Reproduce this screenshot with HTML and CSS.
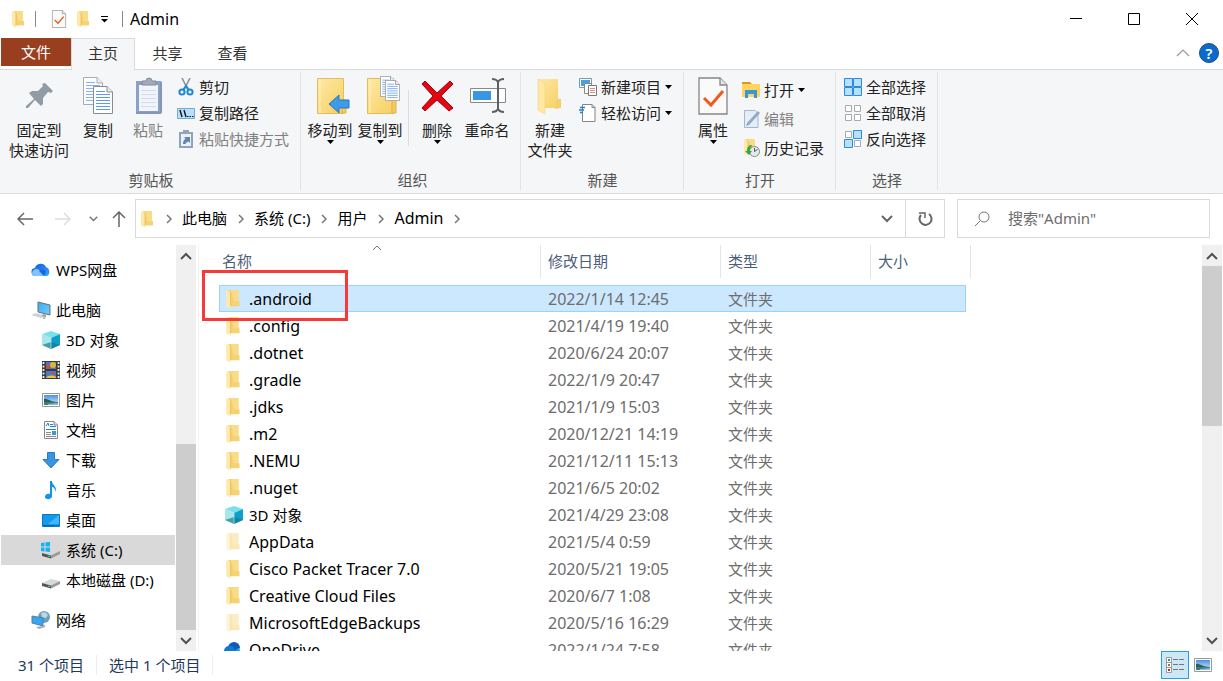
FILE: index.html
```html
<!DOCTYPE html>
<html lang="zh-CN">
  <head>
    <meta charset="UTF-8">
    <meta name="viewport" content="width=device-width, initial-scale=1.0">
    <title>Admin</title>
    <link rel="stylesheet" href="styles.css">
  </head>
  <body>
    <!-- shared icons -->
    <svg class="sprite" aria-hidden="true">
      <defs>
        <linearGradient id="gold" x1="0" y1="0" x2="1" y2="1">
          <stop offset="0" stop-color="#ffe9a6"/><stop offset="1" stop-color="#f6cf62"/>
        </linearGradient>
        <linearGradient id="cloud" x1="0" y1="0" x2="1" y2="1">
          <stop offset="0" stop-color="#1456d8"/><stop offset="1" stop-color="#35a5ff"/>
        </linearGradient>
        <linearGradient id="sky" x1="0" y1="0" x2="0" y2="1">
          <stop offset="0" stop-color="#4c8fe8"/><stop offset="1" stop-color="#d8effa"/>
        </linearGradient>
        <linearGradient id="screen" x1="0" y1="0" x2="1" y2="1">
          <stop offset="0" stop-color="#33aef5"/><stop offset="1" stop-color="#7cc9f5"/>
        </linearGradient>
      </defs>
      <symbol id="folder" viewBox="0 0 18 18">
        <path d="M4 1h9v10h1v4.500H4z" fill="#f5d374"/>
        <path d="M6 1h7v10h-4z" fill="#f9dc88"/>
        <path d="M2 1l4 2v14.500l-4-2z" fill="#ffe9a8"/>
        <path d="M6 3v12.500" stroke="#e2b84c" stroke-width=".7"/>
      </symbol>
      <symbol id="cube" viewBox="0 0 20 20">
        <path d="M10 1l9 3-9 4-9-4z" fill="#7be0ea"/>
        <path d="M1 4l9 4v11l-9-4z" fill="#a6e6ec"/>
        <path d="M19 4l-9 4v11l9-4z" fill="#0c9fc8"/>
        <path d="M10 19l-9-4 9-3 9 3z" fill="#12798f" opacity=".65"/>
        <path d="M10 8v11" stroke="#cdf5f8" stroke-width=".6"/>
      </symbol>
      <symbol id="photo" viewBox="0 0 18 14">
        <path d="M.5.5h17v13H.5z" fill="#fff" stroke="#989898"/>
        <path d="M2 2h14v10H2z" fill="url(#sky)"/>
        <path d="M2 7c3-1 5 1 14 2v3H2z" fill="#3d7d82"/>
        <path d="M2 6c3-1 6 2 9 3H2z" fill="#2f6047"/>
        <path d="M6 11l10-1v2H6z" fill="#8bbccc"/>
      </symbol>
      <symbol id="check-doc" viewBox="0 0 30 38">
        <path d="M1 1h21l7 7v29H1z" fill="#fafafa" stroke="#868686" stroke-width="1.3"/>
        <path d="M22 1v7h7" fill="#e2e6ea" stroke="#868686" stroke-width="1.3"/>
        <path d="M6 21l7 7 12-14" fill="none" stroke="#f05a1c" stroke-width="3"/>
      </symbol>
      <symbol id="text-doc" viewBox="0 0 20 28">
        <path d="M.5.5H14l5.500 5.500v21.500H.5z" fill="#fff" stroke="#848d96"/>
        <path d="M14 .5V6h5.500" fill="#e9edf1" stroke="#848d96"/>
        <path d="M3 5.500h9M3 8.500h14M3 11.500h14M3 14.500h14M3 17.500h14M3 20.500h14M3 23.500h14" stroke="#5b98ee"/>
      </symbol>
      <symbol id="caret" viewBox="0 0 7 4"><path d="M0 0h7L3.500 4z"/></symbol>
      <symbol id="chev-right" viewBox="0 0 8 10"><path d="M2 1l4 4-4 4" fill="none" stroke="#777" stroke-width="1.500"/></symbol>
      <symbol id="chev-down" viewBox="0 0 12 8"><path d="M1 1l5 5 5-5" fill="none" stroke="currentColor" stroke-width="2"/></symbol>
      <symbol id="chev-up" viewBox="0 0 12 8"><path d="M1 7l5-5 5 5" fill="none" stroke="currentColor" stroke-width="2"/></symbol>
      <symbol id="disk" viewBox="0 0 20 20">
        <path d="M1 13l9-4 9 2-8 5z" fill="#d8d8d8"/>
        <path d="M1 13l9 2.500v3L1 16z" fill="#555"/>
        <path d="M10 15.500l9-4.500v3l-9 4.500z" fill="#999"/>
        <path d="M7 16l2 .6" stroke="#4fd060" stroke-width="1.200"/>
      </symbol>
    </svg>

    <div class="window">
      <header class="titlebar">
        <svg class="i18"><use href="#folder"/></svg>
        <span class="bar"></span>
        <button class="plain" aria-label="属性"><svg class="title-doc"><use href="#check-doc"/></svg></button>
        <button class="plain" aria-label="新建文件夹"><svg class="i18"><use href="#folder"/></svg></button>
        <button class="plain more" aria-label="自定义快速访问工具栏"><svg width="7" height="7" viewBox="0 0 7 7"><path d="M0 .5h7" stroke="#000"/><path d="M0 3h7L3.500 6.500z"/></svg></button>
        <span class="bar title-bar"></span>
        <h1>Admin</h1>
        <div class="window-buttons">
          <button aria-label="最小化"><svg width="12" height="12"><path d="M0 5.500h12" stroke="#000"/></svg></button>
          <button aria-label="最大化"><svg width="12" height="12"><path d="M.5.5h11v11H.5z" fill="none" stroke="#000"/></svg></button>
          <button aria-label="关闭"><svg width="12" height="12"><path d="M0 0l12 12M12 0L0 12" stroke="#000"/></svg></button>
        </div>
      </header>

      <nav class="tabs">
        <button class="file-tab">文件</button>
        <button class="tab active">主页</button>
        <button class="tab">共享</button>
        <button class="tab">查看</button>
        <div class="tabs-right">
          <button class="plain" aria-label="折叠功能区"><svg width="14" height="8"><path d="M1 7l6-6 6 6" fill="none" stroke="#999" stroke-width="1.200"/></svg></button>
          <button class="help" aria-label="帮助">?</button>
        </div>
      </nav>

      <section class="ribbon">
        <div class="group">
          <div class="group-body">
            <button class="big pin">
              <svg viewBox="0 0 40 40"><path d="M26 8l8 8-2 2-3-1-5 6 0 6-2 2-6-6-7 8-2 0 0-2 8-7-5-6 3-2 6 0 5-5-1-2z" fill="#919ba3"/></svg>
              <span>固定到<br>快速访问</span>
            </button>
            <button class="big">
              <svg viewBox="0 0 40 40"><use href="#text-doc" x="5" y="2" width="20" height="28" opacity=".7"/><use href="#text-doc" x="15" y="11" width="20" height="28"/></svg>
              <span>复制</span>
            </button>
            <button class="big" disabled>
              <svg viewBox="0 0 40 40">
                <path d="M8 6h24a2 2 0 012 2v29a2 2 0 01-2 2H8z" fill="#8497bb"/>
                <path d="M8 6h24v31H8z" fill="#8ba0c6"/>
                <path d="M11 10h19v26H11z" fill="#f1f5fa"/>
                <path d="M13 15.500h15M13 19.500h15M13 23.500h15M13 27.500h15M13 31.500h15" stroke="#d3dcea"/>
                <path d="M14 6h4a3 3 0 016 0h4v4H14z" fill="#a3abb8" stroke="#7e8aa0"/>
              </svg>
              <span>粘贴</span>
            </button>
            <div class="small-list">
              <button class="small"><svg class="i18" viewBox="0 0 18 18"><path d="M5 0l6 12M13 0L7 12" stroke="#8a9299" stroke-width="1.600"/><circle cx="5" cy="14" r="2.600" fill="none" stroke="#1e8bd0" stroke-width="2"/><circle cx="13" cy="14" r="2.600" fill="none" stroke="#1e8bd0" stroke-width="2"/><path d="M6 12l3-4 3 4" stroke="#1e8bd0" stroke-width="2" fill="none"/></svg>剪切</button>
              <button class="small"><svg class="i18" viewBox="0 0 18 18"><path d="M.5 4.500h17v10H.5z" fill="#b6e0fb" stroke="#74abd0"/><path d="M3 6l2 7M7 6l2 7" stroke="#111" stroke-width="1.400"/><path d="M10 12.500h1.500M12.500 12.500H14M15 12.500h1.500" stroke="#111"/></svg>复制路径</button>
              <button class="small" disabled><svg class="i18" viewBox="0 0 18 18"><path d="M2 2h14v16H2z" fill="#8fa2c4"/><path d="M4 4h10v12H4z" fill="#edf2f8"/><path d="M6 0h6v4H6z" fill="#94a1b8"/><path d="M6 14c0-3 1-4 2.500-5.500L7 7h6v6l-1.500-1.500C10 12 9 12.500 8.500 14z" fill="#6484b8"/></svg>粘贴快捷方式</button>
            </div>
          </div>
          <div class="group-label">剪贴板</div>
        </div>

        <div class="group organize">
          <div class="group-body">
            <button class="big">
              <svg viewBox="0 0 40 40"><path d="M7.500 3.500h26v35h-26z" fill="url(#gold)" stroke="#e3bd58"/><path d="M10 4v34" stroke="#fff2c4"/><path d="M32 25h4v13h-4z" fill="#f4cc5e" stroke="#dfb347"/><path d="M19 29l10-9v5h10v8H29v5z" fill="#3e9be8" stroke="#2779bd"/></svg>
              <span>移动到</span><svg class="caret"><use href="#caret"/></svg>
            </button>
            <button class="big">
              <svg viewBox="0 0 40 40"><path d="M7.500 3.500h26v35h-26z" fill="url(#gold)" stroke="#e3bd58"/><path d="M10 4v34" stroke="#fff2c4"/><path d="M32 25h4v13h-4z" fill="#f4cc5e" stroke="#dfb347"/><use href="#text-doc" x="20" y="1" width="15" height="21"/><use href="#text-doc" x="25" y="5" width="15" height="21"/></svg>
              <span>复制到</span><svg class="caret"><use href="#caret"/></svg>
            </button>
            <span class="divider"></span>
            <button class="big">
              <svg viewBox="0 0 40 40"><path d="M5 9l3-3 12 12L33 6l3 3-12 12 12 12-4 3-12-11L8 36l-3-3 11-12z" fill="#e30613" stroke="#a8000c"/></svg>
              <span>删除</span><svg class="caret"><use href="#caret"/></svg>
            </button>
            <button class="big">
              <svg viewBox="0 0 40 40"><path d="M3.500 13.500h35v14h-35z" fill="#fff" stroke="#888"/><path d="M6 16h18v9H6z" fill="#3797e5"/><path d="M31 7v27M25 4c4 0 5 1 6 3 1-2 2-3 6-3M25 37c4 0 5-1 6-3 1 2 2 3 6 3" fill="none" stroke="#606060" stroke-width="2"/></svg>
              <span>重命名</span>
            </button>
          </div>
          <div class="group-label">组织</div>
        </div>

        <div class="group">
          <div class="group-body">
            <button class="big">
              <svg viewBox="0 0 40 40"><path d="M8 4h20v21h2v8H8z" fill="url(#gold)"/><path d="M8 4l7 4v31l-7-4z" fill="#ffe8a3" stroke="#efcc72" stroke-width=".5"/><path d="M27 24h4v9l-6 1z" fill="#f3d06e"/></svg>
              <span>新建<br>文件夹</span>
            </button>
            <div class="small-list">
              <button class="small"><svg class="i18" viewBox="0 0 18 18"><path d="M.5.5h12v9H.5z" fill="#fff" stroke="#6e9ebf"/><path d="M2 2h9v6H2z" fill="#4aa0df"/><path d="M5.500 5.500h7v10h-7z" fill="#fff" stroke="#888"/><path d="M9.500 7.500h8v10h-8z" fill="#fff" stroke="#777"/><path d="M11 10.500h5M11 12.500h5M11 14.500h5" stroke="#e38a86"/></svg>新建项目<svg class="caret"><use href="#caret"/></svg></button>
              <button class="small"><svg class="i18" viewBox="0 0 18 18"><path d="M3.500.5H13l3 3v14H3.500z" fill="#fff" stroke="#858585"/><path d="M13 .5v3h3" fill="none" stroke="#858585"/><path d="M1 3.500h5M0 6h5M1 8.500h3" stroke="#2281cb" stroke-width="1.300"/></svg>轻松访问<svg class="caret"><use href="#caret"/></svg></button>
            </div>
          </div>
          <div class="group-label">新建</div>
        </div>

        <div class="group">
          <div class="group-body">
            <button class="big">
              <svg viewBox="0 0 40 40"><use href="#check-doc" x="5" y="2" width="30" height="38"/></svg>
              <span>属性</span><svg class="caret"><use href="#caret"/></svg>
            </button>
            <div class="small-list loose">
              <button class="small"><svg class="i18" viewBox="0 0 18 18"><path d="M0 1h8l2 2H0z" fill="#d99c19"/><path d="M0 3h18v13H0z" fill="#ffd35e"/><path d="M3 17v-8h12v8h-3v-4H6v4z" fill="#3797dc"/></svg>打开<svg class="caret"><use href="#caret"/></svg></button>
              <button class="small" disabled><svg class="i18" viewBox="0 0 18 18"><path d="M2.500.5H13l3 3v14H2.500z" fill="#e5edf6" stroke="#a5b5cc"/><path d="M5 13L16 1l2 2L7 15l-3 1z" fill="#93a8c6"/></svg>编辑</button>
              <button class="small"><svg class="i18" viewBox="0 0 18 18"><use href="#folder" x="0" y="-1" width="18" height="18"/><circle cx="12.500" cy="12.500" r="5" fill="#e6eaec" stroke="#7f8c91"/><path d="M12.500 9v3.500l3-2" fill="none" stroke="#555"/><path d="M10 6c-4 0-5 3-5 6H3l4 4 3-4H8c0-2 0-4 2-5z" fill="#36a642"/></svg>历史记录</button>
            </div>
          </div>
          <div class="group-label">打开</div>
        </div>

        <div class="group">
          <div class="group-body">
            <div class="small-list">
              <button class="small"><svg class="i18" viewBox="0 0 18 18"><path d="M.5.5h8v8h-8zM9.500.5h8v8h-8zM.5 9.500h8v8h-8zM9.500 9.500h8v8h-8z" fill="#b8dffb" stroke="#2b8bdc"/></svg>全部选择</button>
              <button class="small"><svg class="i18" viewBox="0 0 18 18"><path d="M1.500 1.500h6v6h-6zM10.500 1.500h6v6h-6zM1.500 10.500h6v6h-6zM10.500 10.500h6v6h-6z" fill="#fff" stroke="#aaa"/></svg>全部取消</button>
              <button class="small"><svg class="i18" viewBox="0 0 18 18"><path d="M1.500 1.500h6v6h-6zM10.500 10.500h6v6h-6z" fill="#fff" stroke="#aaa"/><path d="M9.500.5h8v8h-8zM.5 9.500h8v8h-8z" fill="#b8dffb" stroke="#2b8bdc"/></svg>反向选择</button>
            </div>
          </div>
          <div class="group-label">选择</div>
        </div>
      </section>

      <div class="address-row">
        <div class="history">
          <button class="plain" aria-label="后退"><svg width="16" height="14"><path d="M16 7H1M7 1L1 7l6 6" fill="none" stroke="#666" stroke-width="1.500"/></svg></button>
          <button class="plain" aria-label="前进" disabled><svg width="16" height="14"><path d="M0 7h15M9 1l6 6-6 6" fill="none" stroke="#ddd" stroke-width="1.500"/></svg></button>
          <button class="plain recent" aria-label="最近浏览的位置"><svg width="9" height="6" viewBox="0 0 12 8"><use href="#chev-down"/></svg></button>
          <button class="plain up" aria-label="上移"><svg width="14" height="16"><path d="M7 16V1M1 7l6-6 6 6" fill="none" stroke="#666" stroke-width="1.500"/></svg></button>
        </div>
        <div class="address">
          <svg class="i18"><use href="#folder"/></svg>
          <svg class="sep"><use href="#chev-right"/></svg>
          <a href="#">此电脑</a>
          <svg class="sep"><use href="#chev-right"/></svg>
          <a href="#">系统 (C:)</a>
          <svg class="sep"><use href="#chev-right"/></svg>
          <a href="#">用户</a>
          <svg class="sep"><use href="#chev-right"/></svg>
          <a href="#" class="latin">Admin</a>
          <svg class="sep"><use href="#chev-right"/></svg>
          <button class="plain drop" aria-label="以前的位置"><svg width="12" height="8"><use href="#chev-down"/></svg></button>
          <button class="plain refresh" aria-label="刷新"><svg width="16" height="16"><path d="M4 4a6 6 0 108-1" fill="none" stroke="#666" stroke-width="2"/><path d="M2 2h6v5" fill="none" stroke="#666" stroke-width="1.500"/></svg></button>
        </div>
        <label class="search">
          <svg width="16" height="16"><circle cx="10" cy="6" r="5" fill="none" stroke="#777"/><path d="M6.500 9.500L1 15" stroke="#777"/></svg>
          <input type="search" placeholder='搜索"Admin"' aria-label="搜索">
        </label>
      </div>

      <main class="content">
        <aside class="sidebar">
          <ul class="tree">
            <li class="root"><a href="#"><svg viewBox="0 0 20 20"><path d="M5 16a4 4 0 01-1-8 6 6 0 0111-1 5 5 0 011 9z" fill="url(#cloud)"/><path d="M1 13c1-5 7-5 9-1l3 4H5c-3 0-4-1-4-3z" fill="#7fc4ff"/><path d="M8 11c2-3 6-2 7 1l-2 4z" fill="#1d65e8"/></svg>WPS网盘</a></li>
            <li class="root"><a href="#"><svg viewBox="0 0 20 20"><path d="M7 2l12 3v10L7 12z" fill="url(#screen)" stroke="#61717c"/><path d="M0 15l5-2 10 3-5 2z" fill="#ccd2d6"/><path d="M12 14l3 1v2l-4-1z" fill="#929ea5"/><path d="M11 18l3-1 1 1-2 1z" fill="#aaa"/></svg>此电脑</a></li>
            <li><a href="#"><svg><use href="#cube"/></svg>3D 对象</a></li>
            <li><a href="#"><svg viewBox="0 0 20 20"><path d="M1 1h18v18H1z" fill="#3a3a3a"/><path d="M2.500 2v16M17.500 2v16" stroke="#eee" stroke-width="1.800" stroke-dasharray="2 1.500"/><path d="M5 2h10v7H5z" fill="#4b78ca"/><path d="M5 11h10v7H5z" fill="#4b78ca"/><circle cx="12" cy="5" r="3" fill="#e1b829"/><circle cx="7" cy="7" r="2" fill="#d9472d"/><path d="M10 12l4 0-2 3z" fill="#d9472d"/><path d="M5 18c2-3 7-3 10-1v1z" fill="#f0c52d"/></svg>视频</a></li>
            <li><a href="#"><svg viewBox="0 0 20 20"><use href="#photo" x="1" y="3" width="18" height="14"/></svg>图片</a></li>
            <li><a href="#"><svg viewBox="0 0 20 20"><path d="M3.500 1.500H13l3.500 3.500v13.500h-13z" fill="#fff" stroke="#838b91"/><path d="M13 1.500V5h3.500" fill="#ddd" stroke="#838b91"/><path d="M5 6l2-3 1 3M9 4.500h3M9 6.500h6M5 9.500h10" fill="none" stroke="#2486d0"/><path d="M5 12.500h5M5 14.500h5M5 16.500h10" stroke="#888"/><path d="M11 11h4v4h-4z" fill="#4298ce"/></svg>文档</a></li>
            <li><a href="#"><svg viewBox="0 0 20 20"><path d="M6.500 2.500h7v7h4.500L10 18 2 9.500h4.500z" fill="#3895e1" stroke="#2a7bc3"/></svg>下载</a></li>
            <li><a href="#"><svg viewBox="0 0 20 20"><path d="M9 1h2c0 4 5 5 4 11-1-4-3-5-4-5v9c0 4-7 4-7 1 0-3 3-4 5-3z" fill="#0d94ed"/></svg>音乐</a></li>
            <li><a href="#"><svg viewBox="0 0 20 20"><path d="M1.500 4.500h17v12h-17z" fill="#1498ec" stroke="#0878bd"/><path d="M18 5v9H7z" fill="#40b5ff"/><path d="M2 15.500h12M15 15.500h1M17 15.500h1" stroke="#07679e"/></svg>桌面</a></li>
            <li class="selected"><a href="#"><svg viewBox="0 0 20 20"><use href="#disk"/><path d="M0 3l3.500-.5v4H0zM4.500 2.300L9 2v4.500H4.500zM0 7.500h3.500v4L0 11zM4.500 7.500H9V12l-4.500-.5z" fill="#17b3ef"/></svg>系统 (C:)</a></li>
            <li><a href="#"><svg><use href="#disk"/></svg>本地磁盘 (D:)</a></li>
            <li class="root"><a href="#"><svg viewBox="0 0 20 20"><circle cx="13" cy="7" r="6" fill="#6a9fbe"/><path d="M10 3l4-1 3 3-2 3-4-1z" fill="#bdd7e4"/><path d="M1 6l11 2v8L1 13z" fill="#37a6ed" stroke="#5480a0"/><path d="M12 16l2-1v2l-6 2-3-2z" fill="#9dacb5"/></svg>网络</a></li>
          </ul>
          <div class="scrollbar side-scroll">
            <button aria-label="向上滚动"><svg width="12" height="8"><use href="#chev-up"/></svg></button>
            <div class="track"><span class="thumb"></span></div>
            <button aria-label="向下滚动"><svg width="12" height="8"><use href="#chev-down"/></svg></button>
          </div>
        </aside>

        <section class="files">
          <svg class="sort-mark" width="10" height="6"><path d="M1 5l4-4 4 4" fill="none" stroke="#777"/></svg>
          <table>
            <colgroup><col class="c-name"><col class="c-date"><col class="c-type"><col class="c-size"><col class="c-end"></colgroup>
            <thead>
              <tr><th>名称</th><th>修改日期</th><th>类型</th><th>大小</th><th></th></tr>
            </thead>
            <tbody>
              <tr class="selected"><td class="latin"><svg><use href="#folder"/></svg>.android</td><td class="latin">2022/1/14 12:45</td><td>文件夹</td><td></td></tr>
              <tr><td class="latin"><svg><use href="#folder"/></svg>.config</td><td class="latin">2021/4/19 19:40</td><td>文件夹</td><td></td></tr>
              <tr><td class="latin"><svg><use href="#folder"/></svg>.dotnet</td><td class="latin">2020/6/24 20:07</td><td>文件夹</td><td></td></tr>
              <tr><td class="latin"><svg><use href="#folder"/></svg>.gradle</td><td class="latin">2022/1/9 20:47</td><td>文件夹</td><td></td></tr>
              <tr><td class="latin"><svg><use href="#folder"/></svg>.jdks</td><td class="latin">2021/1/9 15:03</td><td>文件夹</td><td></td></tr>
              <tr><td class="latin"><svg><use href="#folder"/></svg>.m2</td><td class="latin">2020/12/21 14:19</td><td>文件夹</td><td></td></tr>
              <tr><td class="latin"><svg><use href="#folder"/></svg>.NEMU</td><td class="latin">2021/12/11 15:13</td><td>文件夹</td><td></td></tr>
              <tr><td class="latin"><svg><use href="#folder"/></svg>.nuget</td><td class="latin">2021/6/5 20:02</td><td>文件夹</td><td></td></tr>
              <tr><td><svg><use href="#cube"/></svg>3D 对象</td><td class="latin">2021/4/29 23:08</td><td>文件夹</td><td></td></tr>
              <tr class="hidden-item"><td class="latin"><svg><use href="#folder"/></svg>AppData</td><td class="latin">2021/5/4 0:59</td><td>文件夹</td><td></td></tr>
              <tr><td class="latin"><svg><use href="#folder"/></svg>Cisco Packet Tracer 7.0</td><td class="latin">2020/5/21 19:05</td><td>文件夹</td><td></td></tr>
              <tr><td class="latin"><svg><use href="#folder"/></svg>Creative Cloud Files</td><td class="latin">2020/6/7 1:08</td><td>文件夹</td><td></td></tr>
              <tr class="hidden-item"><td class="latin"><svg><use href="#folder"/></svg>MicrosoftEdgeBackups</td><td class="latin">2020/5/16 16:29</td><td>文件夹</td><td></td></tr>
              <tr><td class="latin"><svg viewBox="0 0 20 20"><path d="M4 8a6 6 0 0112 0l-6 6z" fill="#0a5cb8"/><path d="M5 16a5 5 0 010-10c4-1 6 3 8 10z" fill="#0f79d4"/><path d="M6 16l8-8a5 5 0 011 8z" fill="#249fe8"/></svg>OneDrive</td><td class="latin">2022/1/24 7:58</td><td>文件夹</td><td></td></tr>
            </tbody>
          </table>
          <div class="highlight"></div>
        </section>
        <div class="scrollbar file-scroll">
          <button aria-label="向上滚动"><svg width="12" height="8"><use href="#chev-up"/></svg></button>
          <div class="track"><span class="thumb"></span></div>
          <button aria-label="向下滚动"><svg width="12" height="8"><use href="#chev-down"/></svg></button>
        </div>
      </main>

      <footer class="status">
        <span>31 个项目</span>
        <span>选中 1 个项目</span>
        <div class="views">
          <button class="active" aria-label="详细信息"><svg width="20" height="18"><path d="M1.500 1.500h5v5h-5zM1.500 6.500h5v5h-5zM1.500 11.500h5v5h-5z" fill="#fff" stroke="#999"/><path d="M3 3h2v2H3z" fill="#3a7fae"/><path d="M3 8h2v2H3z" fill="#b06a3a"/><path d="M3 13h2v2H3z" fill="#c22"/><path d="M8 3.500h5M14 3.500h5M8 8.500h5M14 8.500h5M8 13.500h5M14 13.500h5" stroke="#777"/></svg></button>
          <button aria-label="大图标"><svg width="18" height="14"><use href="#photo"/></svg></button>
        </div>
      </footer>
    </div>
  </body>
</html>
```

FILE: styles.css
```css
:root {
  --ribbon: #f5f6f7;
  --line: #dadbdc;
  --border: #d9d9d9;
  --muted: #6d6d6d;
  --head: #4c607a;
  --scroll: #f0f0f0;
  --thumb: #cdcdcd;
}

* {
  box-sizing: border-box;
}

body {
  margin: 0;
  font-family: "Noto Sans", "Noto Sans CJK SC", sans-serif;
  font-size: 15px;
  line-height: 20px;
  color: #000;
  background: #fff;
}

button {
  font: inherit;
  color: inherit;
  border: none;
  background: none;
  padding: 0;
}

a {
  color: inherit;
  text-decoration: none;
}

svg {
  display: block;
  flex: none;
}

.sprite {
  position: absolute;
  width: 0;
  height: 0;
}

.i18 {
  width: 18px;
  height: 18px;
}

.latin {
  font-size: 16px;
}

.window {
  display: flex;
  flex-direction: column;
  height: 100vh;
  overflow: hidden;
}

.plain {
  display: flex;
  align-items: center;
  justify-content: center;
}

/* title bar */
.titlebar {
  display: flex;
  align-items: center;
  height: 38px;
  padding-left: 10px;
}

.bar {
  width: 1px;
  height: 16px;
  margin: 0 15px 0 7px;
  background: #888;
}

.title-doc {
  width: 16px;
  height: 18px;
  margin-right: 8px;
}

.more {
  margin-left: 8px;
}

.title-bar {
  margin: 0 7px 0 14px;
}

h1 {
  margin: 0;
  font-size: 16px;
  font-weight: 400;
}

.window-buttons {
  display: flex;
  margin-left: auto;
  padding-right: 2px;
}

.window-buttons button {
  display: flex;
  align-items: center;
  justify-content: center;
  width: 58px;
  height: 38px;
}

/* tabs */
.tabs {
  display: flex;
  height: 32px;
  padding-left: 1px;
  border-bottom: 1px solid var(--line);
}

.file-tab {
  width: 70px;
  height: 28px;
  color: #fff;
  background: #9a3e20;
}

.tab {
  width: 64px;
  height: 32px;
  padding-bottom: 3px;
  border: 1px solid transparent;
  border-bottom: none;
  color: #333;
}

.tab + .tab {
  width: 65px;
}

.tab.active {
  background: var(--ribbon);
  border-color: var(--line);
}

.tabs-right {
  display: flex;
  align-items: center;
  gap: 9px;
  margin-left: auto;
  padding: 0 4px 2px 0;
}

.help {
  width: 20px;
  height: 20px;
  border: 1px solid #1c4d80;
  border-radius: 50%;
  background: #0a6bce;
  color: #fff;
  font-weight: 600;
  line-height: 18px;
}

/* ribbon */
.ribbon {
  display: flex;
  height: 124px;
  padding-left: 1px;
  background: var(--ribbon);
  border-bottom: 1px solid var(--line);
  color: #222;
}

.group {
  display: flex;
  flex-direction: column;
  margin: 2px 0 3px;
  padding: 0 11px 0 4px;
  border-right: 1px solid #e2e3e4;
}

.group.organize {
  padding-right: 8px;
}

.group-body {
  display: flex;
  flex: 1;
  align-items: flex-start;
  padding-top: 3px;
}

.group-label {
  margin-right: -8px;
  line-height: 20px;
  text-align: center;
  color: #555;
}

.big {
  display: flex;
  flex-direction: column;
  align-items: center;
  width: 50px;
  white-space: nowrap;
}

.big.pin {
  width: 68px;
}

.big > svg {
  width: 40px;
  height: 40px;
  margin-bottom: 5px;
}

.big > .caret,
.caret {
  width: 7px;
  height: 4px;
  margin: 0;
}

button:disabled {
  color: #808080;
}

.divider {
  width: 1px;
  height: 56px;
  margin: 15px 3px 0;
  background: #dcddde;
}

.small-list {
  padding-left: 4px;
}

.small {
  display: flex;
  align-items: center;
  height: 26px;
  gap: 4px;
  margin-top: -1px;
  margin-bottom: 1px;
  white-space: nowrap;
}

.loose .small {
  height: 29px;
  margin: 0;
}

/* address row */
.address-row {
  display: flex;
  padding: 5px 13px 7px 0;
}

.history {
  display: flex;
  align-items: center;
  width: 135px;
  padding-left: 17px;
  color: #777;
}

.history .plain + .plain {
  margin-left: 22px;
}

.history .plain + .recent {
  margin-left: 18px;
}

.history .plain + .up {
  margin-left: 14px;
}

.address {
  display: flex;
  flex: 1;
  align-items: center;
  height: 39px;
  padding-left: 3px;
  border: 1px solid var(--border);
}

.address a {
  padding-bottom: 2px;
}

.address .sep {
  width: 8px;
  height: 10px;
  margin: 0 9px 0 10px;
}

.address .i18 + .sep {
  margin-left: 8px;
}

.drop {
  width: 36px;
  margin-left: auto;
  color: #666;
}

.refresh {
  align-self: stretch;
  width: 39px;
  border-left: 1px solid var(--border);
}

.search {
  display: flex;
  align-items: center;
  gap: 18px;
  width: 253px;
  margin-left: 12px;
  padding-left: 16px;
  border: 1px solid var(--border);
}

.search input {
  flex: 1;
  min-width: 0;
  padding: 0 0 2px;
  border: none;
  outline: none;
  font: inherit;
  background: none;
}

.search input::placeholder {
  color: var(--muted);
}

/* main area */
.content {
  display: flex;
  flex: 1;
  min-height: 0;
}

.sidebar {
  display: flex;
  width: 199px;
  padding-right: 2px;
  border-right: 1px solid #f3f3f3;
}

.tree {
  flex: 1;
  margin: 0;
  padding: 10px 1px 0;
  list-style: none;
}

.tree a {
  display: flex;
  align-items: center;
  gap: 5px;
  height: 30px;
  padding-left: 40px;
  white-space: nowrap;
}

.tree svg {
  width: 20px;
  height: 20px;
}

.tree .root a {
  padding-left: 30px;
}

.tree li + .root {
  margin-top: 10px;
}

.tree .selected {
  background: #d9d9d9;
}

.scrollbar {
  display: flex;
  flex-direction: column;
  width: 20px;
  background: var(--scroll);
  color: #505050;
}

.scrollbar button {
  display: flex;
  align-items: center;
  justify-content: center;
  height: 21px;
}

.track {
  display: flex;
  flex: 1;
}

.thumb {
  flex: 1;
  background: var(--thumb);
}

.side-scroll .thumb {
  height: 51%;
  align-self: flex-end;
}

.file-scroll {
  margin-right: 1px;
}

.file-scroll .thumb {
  height: 44%;
}

/* file list */
.files {
  position: relative;
  flex: 1;
  padding-left: 20px;
  overflow: hidden;
}

table {
  table-layout: fixed;
  width: 752px;
  border-spacing: 0;
}

.c-name {
  width: 322px;
}

.c-date {
  width: 180px;
}

.c-type {
  width: 150px;
}

.c-size {
  width: 95px;
}

.c-end {
  width: 5px;
}

th {
  height: 33px;
  padding: 0 7px 2px;
  border-right: 1px solid #e5e5e5;
  color: var(--head);
  font-weight: 400;
  text-align: left;
}

th:first-child {
  padding-left: 3px;
}

th:nth-child(4) {
  border-right: none;
}

th:last-child {
  padding: 0;
}

tbody::before {
  content: "";
  display: block;
  height: 7px;
}

td {
  height: 27px;
  padding: 0 7px;
  color: var(--muted);
  white-space: nowrap;
}

td:first-child {
  display: flex;
  align-items: center;
  gap: 5px;
  padding-left: 5px;
  color: #000;
}

td svg {
  width: 20px;
  height: 20px;
}

.selected td {
  background: #cce8ff;
  border: 1px solid #99d1ff;
  border-width: 1px 0;
}

.selected td:first-child {
  padding-left: 4px;
  border-left-width: 1px;
}

.selected td:last-child {
  border-right-width: 1px;
}

.hidden-item svg {
  opacity: .5;
}

.sort-mark {
  position: absolute;
  top: 0;
  left: 173px;
}

/* red frame over the selected folder */
.highlight {
  position: absolute;
  top: 25px;
  left: 3px;
  width: 146px;
  height: 51px;
  border: 3px solid #f93838;
}

/* status bar */
.status {
  display: flex;
  align-items: center;
  height: 30px;
  padding: 0 6px 2px 18px;
  color: #1e395b;
}

.status span {
  padding-right: 12px;
  margin-right: 12px;
  border-right: 1px solid #eee;
}

.views {
  display: flex;
  margin-left: auto;
}

.views button {
  display: flex;
  align-items: center;
  justify-content: center;
  width: 28px;
  height: 28px;
}

.views .active {
  border: 1px solid #26a0da;
  background: #cce8f7;
}
```
